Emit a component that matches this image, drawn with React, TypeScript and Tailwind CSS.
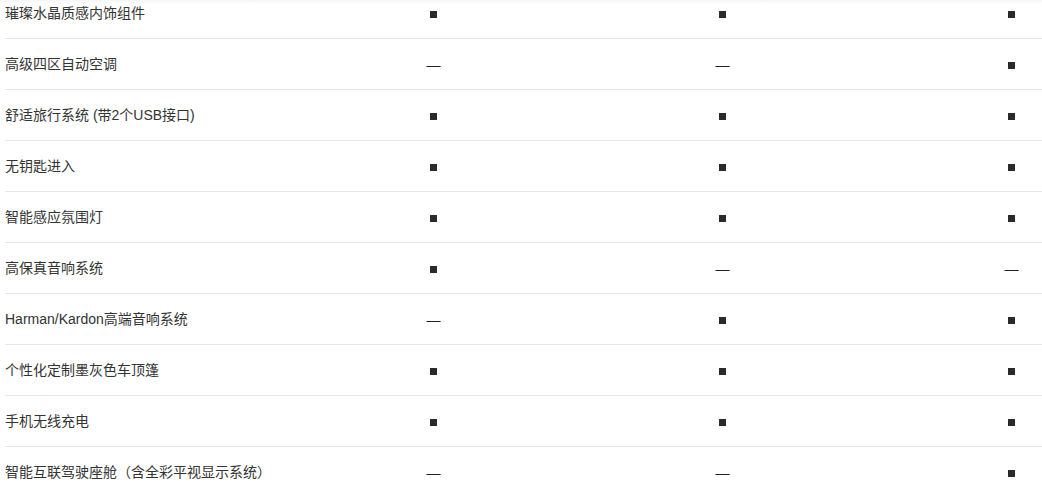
const rows: { name: string; marks: [boolean, boolean, boolean] }[] = [
  { name: "璀璨水晶质感内饰组件", marks: [true, true, true] },
  { name: "高级四区自动空调", marks: [false, false, true] },
  { name: "舒适旅行系统 (带2个USB接口)", marks: [true, true, true] },
  { name: "无钥匙进入", marks: [true, true, true] },
  { name: "智能感应氛围灯", marks: [true, true, true] },
  { name: "高保真音响系统", marks: [true, false, false] },
  { name: "Harman/Kardon高端音响系统", marks: [false, true, true] },
  { name: "个性化定制墨灰色车顶篷", marks: [true, true, true] },
  { name: "手机无线充电", marks: [true, true, true] },
  { name: "智能互联驾驶座舱（含全彩平视显示系统）", marks: [false, false, true] },
];

function Mark({ on }: { on: boolean }) {
  if (on) {
    return (
      <span
        className="mt-[2px] inline-block h-[7px] w-[7px] bg-[#2a2a2a]"
        aria-label="■"
      />
    );
  }
  return <span className="mt-[1px] text-[14px] leading-none text-[#222]">—</span>;
}

export default function App() {
  return (
    <div
      className="relative h-[495px] w-[1042px] overflow-hidden bg-white text-[#333]"
      style={{ fontFamily: '"Liberation Sans", "Noto Sans CJK SC", sans-serif' }}
    >
      <div className="absolute inset-x-0 top-0 h-[4px] bg-gradient-to-b from-black/[0.04] to-transparent" />
      <div className="-mt-[12px] pl-[5px]">
        {rows.map((row) => (
          <div
            key={row.name}
            className="grid h-[51px] grid-cols-[284px_289px_289px_289px] items-center border-b border-[#e6e6e6]"
          >
            <div className="whitespace-nowrap text-[14px]">{row.name}</div>
            {row.marks.map((m, i) => (
              <div key={i} className="flex items-center justify-center">
                <Mark on={m} />
              </div>
            ))}
          </div>
        ))}
      </div>
    </div>
  );
}
